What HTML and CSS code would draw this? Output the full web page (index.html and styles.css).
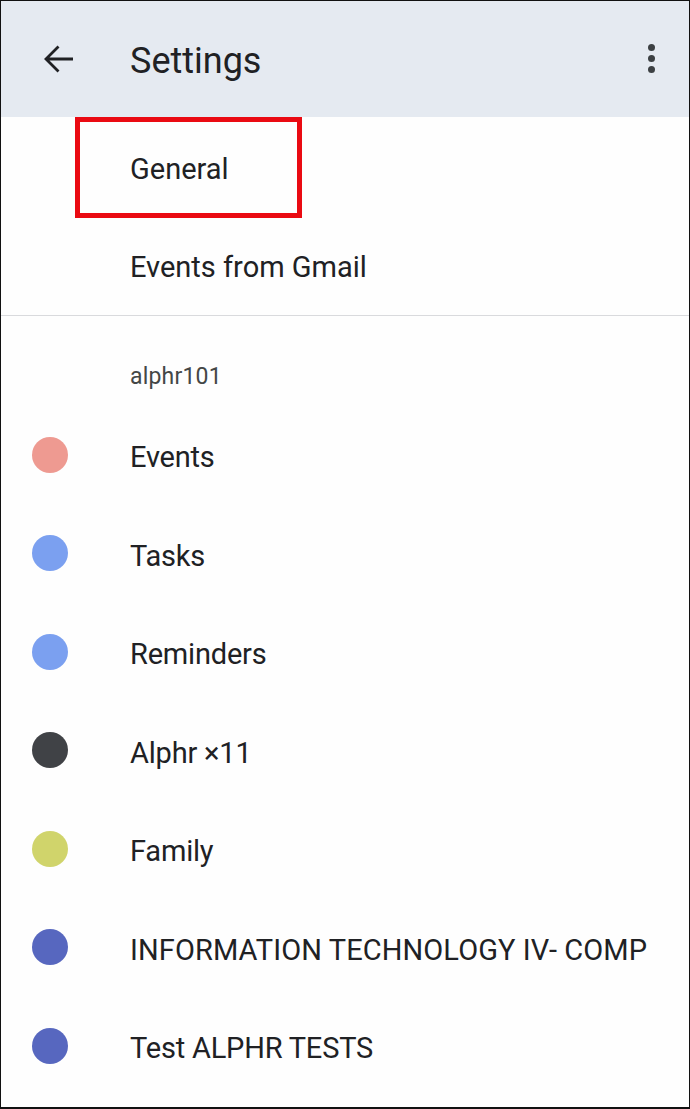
FILE: index.html
```html
<!DOCTYPE html>
<html lang="en">
<head>
<meta charset="utf-8">
<title>Settings</title>
<link rel="stylesheet" href="styles.css">
</head>
<body>
<div class="frame">
  <header class="appbar">
    <span class="back">
      <svg width="32" height="32" viewBox="0 0 32 32" aria-hidden="true"><path d="M30 16H3.5M15.5 3.5L3 16l12.5 12.5" fill="none" stroke="#202124" stroke-width="2.8"/></svg>
    </span>
    <h1 class="title">Settings</h1>
    <span class="kebab"><i></i><i></i><i></i></span>
  </header>
  <nav class="menu">
    <div class="row">General</div>
    <div class="row">Events from Gmail</div>
    <span class="highlight"></span>
  </nav>
  <div class="divider"></div>
  <section class="account">
    <div class="account-name">alphr101</div>
    <ul class="cals">
      <li class="cal"><span class="dot flamingo"></span><span class="cal-name">Events</span></li>
      <li class="cal"><span class="dot sky"></span><span class="cal-name">Tasks</span></li>
      <li class="cal"><span class="dot sky"></span><span class="cal-name">Reminders</span></li>
      <li class="cal"><span class="dot graphite"></span><span class="cal-name">Alphr ×11</span></li>
      <li class="cal"><span class="dot citron"></span><span class="cal-name">Family</span></li>
      <li class="cal"><span class="dot blueberry"></span><span class="cal-name caps">INFORMATION TECHNOLOGY IV- COMP</span></li>
      <li class="cal"><span class="dot blueberry"></span><span class="cal-name">Test ALPHR TESTS</span></li>
    </ul>
  </section>
</div>
</body>
</html>
```

FILE: styles.css
```css
* { box-sizing: border-box; }
html, body { margin: 0; padding: 0; background: #fdfdfe; }
body { font-family: Roboto, "Noto Sans", Arial, sans-serif; color: #202124; }

.frame {
  position: relative;
  width: 690px;
  height: 1109px;
  border: 1px solid #111;
  border-bottom-width: 2px;
  background: #fefefe;
  overflow: hidden;
}

.appbar {
  height: 116px;
  background: #e5eaf1;
  display: flex;
  align-items: center;
  padding-left: 42px;
  padding-right: 34px;
}
.back { width: 32px; height: 32px; display: flex; }
.title {
  margin: 4px 0 0 55px;
  font-size: 36px;
  font-weight: 400;
  color: #202124;
  flex: 1;
}
.kebab {
  display: flex;
  flex-direction: column;
  gap: 4px;
  margin-top: -2px;
}
.kebab i {
  display: block;
  width: 7px;
  height: 7px;
  border-radius: 50%;
  background: #3c4043;
}

.menu {
  position: relative;
  padding-top: 2px;
}
.row {
  height: 98px;
  display: flex;
  align-items: center;
  padding-left: 129px;
  padding-top: 2px;
  font-size: 29px;
  color: #202124;
}
.highlight {
  position: absolute;
  left: 74px;
  top: 0;
  width: 227px;
  height: 101px;
  border: 5px solid #ea0a12;
}

.divider { height: 1px; background: #d9dadd; }

.account-name {
  padding: 48px 0 19px 129px;
  font-size: 23px;
  line-height: 25px;
  color: #444746;
  letter-spacing: 0.2px;
}
.cals { list-style: none; margin: 0; padding: 0; }
.cal {
  height: 98.5px;
  display: flex;
  align-items: center;
  padding-left: 31px;
}
.dot {
  width: 36px;
  height: 36px;
  border-radius: 50%;
  margin-right: 62px;
  margin-bottom: 5px;
  flex: none;
}
.cal-name { font-size: 29px; color: #202124; white-space: nowrap; letter-spacing: -0.2px; }
.cal-name.caps { letter-spacing: 0.1px; }
.flamingo { background: #ee9a91; }
.sky { background: #7ba0f0; }
.graphite { background: #404246; }
.citron { background: #d0d46b; }
.blueberry { background: #5767bf; }
```
